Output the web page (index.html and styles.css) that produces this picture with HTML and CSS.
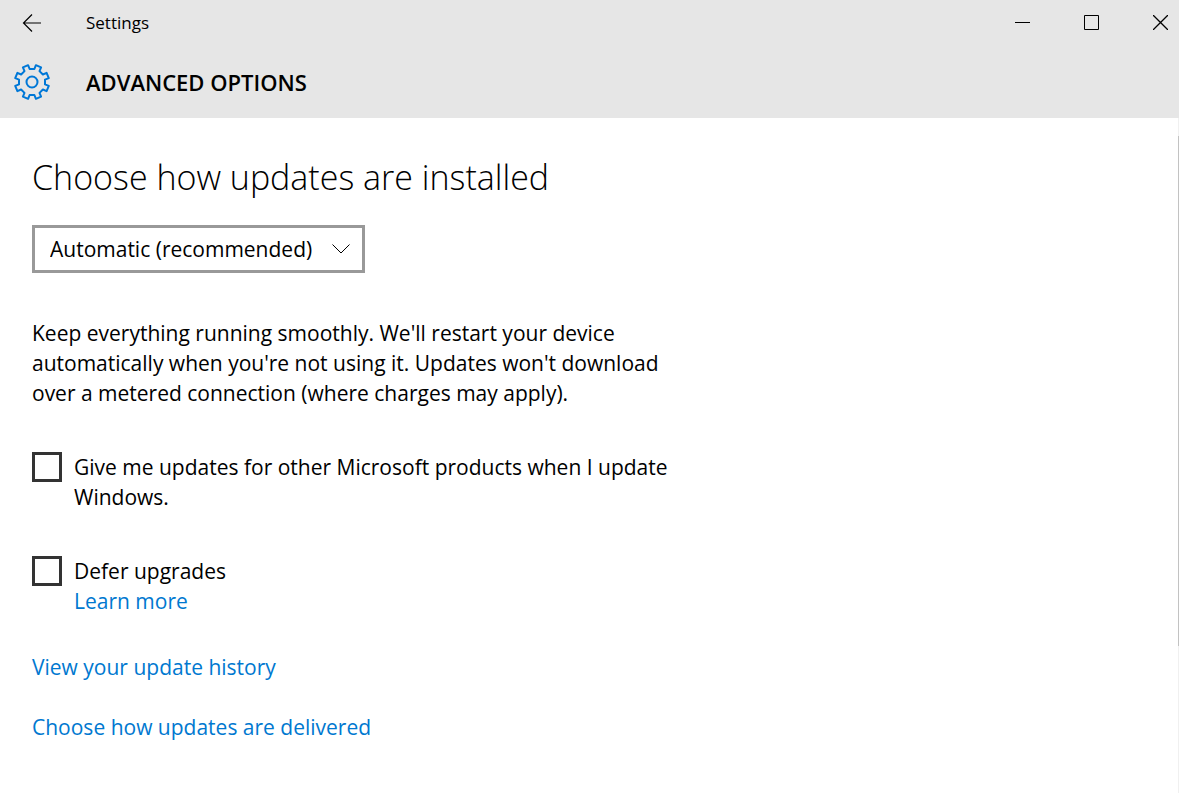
FILE: index.html
```html
<!DOCTYPE html>
<html lang="en">
<head>
    <meta charset="UTF-8" />
    <meta name="viewport" content="width=device-width, initial-scale=1.0" />
    <title>Settings</title>
    <link rel="stylesheet" href="styles.css">
</head>
<body>
    <header class="header">
        <div class="titlebar">
            <button class="back-btn" aria-label="Back">
                <svg width="20" height="20" viewBox="0 0 20 20"><path d="M19 10H1.5M10 1.5L1.5 10L10 18.5" /></svg>
            </button>
            <span class="app-name">Settings</span>
            <div class="window-buttons">
                <button class="window-btn" aria-label="Minimize">
                    <svg width="15" height="15" viewBox="0 0 15 15"><path d="M0 7.5H15" /></svg>
                </button>
                <button class="window-btn" aria-label="Maximize">
                    <svg width="15" height="15" viewBox="0 0 15 15"><path d="M0.5 0.5H14.5V14.5H0.5Z" /></svg>
                </button>
                <button class="window-btn" aria-label="Close">
                    <svg width="15" height="15" viewBox="0 0 15 15"><path stroke-width="1.3" d="M0 0L15 15M15 0L0 15" /></svg>
                </button>
            </div>
        </div>
        <div class="page-title">
            <svg class="gear" width="38" height="38" viewBox="-19 -19 38 38">
                <path d="M2.4 -13L3.9 -16.8L9.1 -14.6L7.5 -10.9L10.9 -7.5L14.6 -9.1L16.8 -3.9L13 -2.4V2.4L16.8 3.9L14.6 9.1L10.9 7.5L7.5 10.9L9.1 14.6L3.9 16.8L2.4 13H-2.4L-3.9 16.8L-9.1 14.6L-7.5 10.9L-10.9 7.5L-14.6 9.1L-16.8 3.9L-13 2.4V-2.4L-16.8 -3.9L-14.6 -9.1L-10.9 -7.5L-7.5 -10.9L-9.1 -14.6L-3.9 -16.8L-2.4 -13Z" />
                <circle r="5.5" />
            </svg>
            <h1>ADVANCED OPTIONS</h1>
        </div>
    </header>

    <div class="content">
        <main class="main">
            <h2><label for="installMode">Choose how updates are installed</label></h2>

            <div class="select-box">
                <select id="installMode">
                    <option>Automatic (recommended)</option>
                    <option>Notify to schedule restart</option>
                </select>
                <svg class="chevron" width="18" height="10" viewBox="0 0 18 10"><path d="M0.5 0.5L9 9L17.5 0.5" /></svg>
            </div>

            <p class="description">Keep everything running smoothly. We'll restart your device automatically when you're not using it. Updates won't download over a metered connection (where charges may apply).</p>

            <div class="option">
                <input type="checkbox" id="otherProducts" />
                <label for="otherProducts">Give me updates for other Microsoft products when I update Windows.</label>
            </div>

            <div class="option">
                <input type="checkbox" id="deferUpgrades" />
                <div class="option-text">
                    <label for="deferUpgrades">Defer upgrades</label>
                    <a href="#">Learn more</a>
                </div>
            </div>

            <nav class="links">
                <a href="#">View your update history</a>
                <a href="#">Choose how updates are delivered</a>
            </nav>
        </main>
        <div class="scrollbar">
            <div class="thumb"></div>
        </div>
    </div>
</body>
</html>
```
FILE: styles.css
```css
* {
    margin: 0;
    padding: 0;
    box-sizing: border-box;
}

body {
    display: flex;
    flex-direction: column;
    min-height: 100vh;
    background-color: #fff;
    color: #000;
    font-family: 'Open Sans', sans-serif;
    font-size: 21px;
    line-height: 30px;
}

button {
    background: none;
    border: none;
    cursor: pointer;
}

svg {
    display: block;
    fill: none;
    stroke: #000;
}

a {
    color: #0078d0;
    text-decoration: none;
}

.header {
    background-color: #e6e6e6;
}

.titlebar {
    display: flex;
    align-items: center;
    height: 45px;
}

.back-btn {
    display: flex;
    justify-content: center;
    align-items: center;
    width: 64px;
    height: 44px;
    margin-right: 22px;
}

.back-btn svg {
    stroke-width: 1.2;
}

.app-name {
    font-size: 17px;
}

.window-buttons {
    display: flex;
    gap: 32px;
    margin-left: auto;
}

.window-btn {
    display: flex;
    justify-content: center;
    align-items: center;
    width: 37px;
    height: 45px;
}

.page-title {
    display: flex;
    align-items: center;
    gap: 35px;
    height: 73px;
    padding-left: 13px;
}

.gear {
    stroke: #0078d7;
    stroke-width: 2;
    stroke-linejoin: round;
}

h1 {
    font-size: 22px;
    font-weight: 600;
    line-height: 32px;
}

.content {
    display: flex;
    flex: 1;
}

.main {
    flex: 1;
    padding: 35px 32px;
}

h2 {
    margin-bottom: 24px;
    font-size: 34px;
    font-weight: 300;
    line-height: 48px;
}

.select-box {
    position: relative;
    width: 333px;
}

select {
    appearance: none;
    width: 100%;
    height: 48px;
    padding: 0 40px 0 15px;
    background-color: #fff;
    border: 3px solid #999;
    border-radius: 0;
    color: #000;
    font: inherit;
}

.chevron {
    position: absolute;
    top: 19px;
    right: 15px;
    pointer-events: none;
}

.description {
    max-width: 650px;
    margin: 45px 0 44px;
}

.option {
    display: flex;
    align-items: flex-start;
    gap: 12px;
    max-width: 660px;
    margin-bottom: 44px;
}

.option-text {
    display: flex;
    flex-direction: column;
}

input[type="checkbox"] {
    appearance: none;
    flex-shrink: 0;
    width: 30px;
    height: 30px;
    border: 3px solid #333;
}

input[type="checkbox"]:checked {
    background-color: #0078d7;
}

.links {
    display: flex;
    flex-direction: column;
    align-items: flex-start;
    gap: 30px;
    margin-top: -8px;
}

.scrollbar {
    width: 1px;
    padding-top: 18px;
    background-color: #f0f0f0;
}

.thumb {
    height: 510px;
    background-color: #c2c2c2;
}
```
